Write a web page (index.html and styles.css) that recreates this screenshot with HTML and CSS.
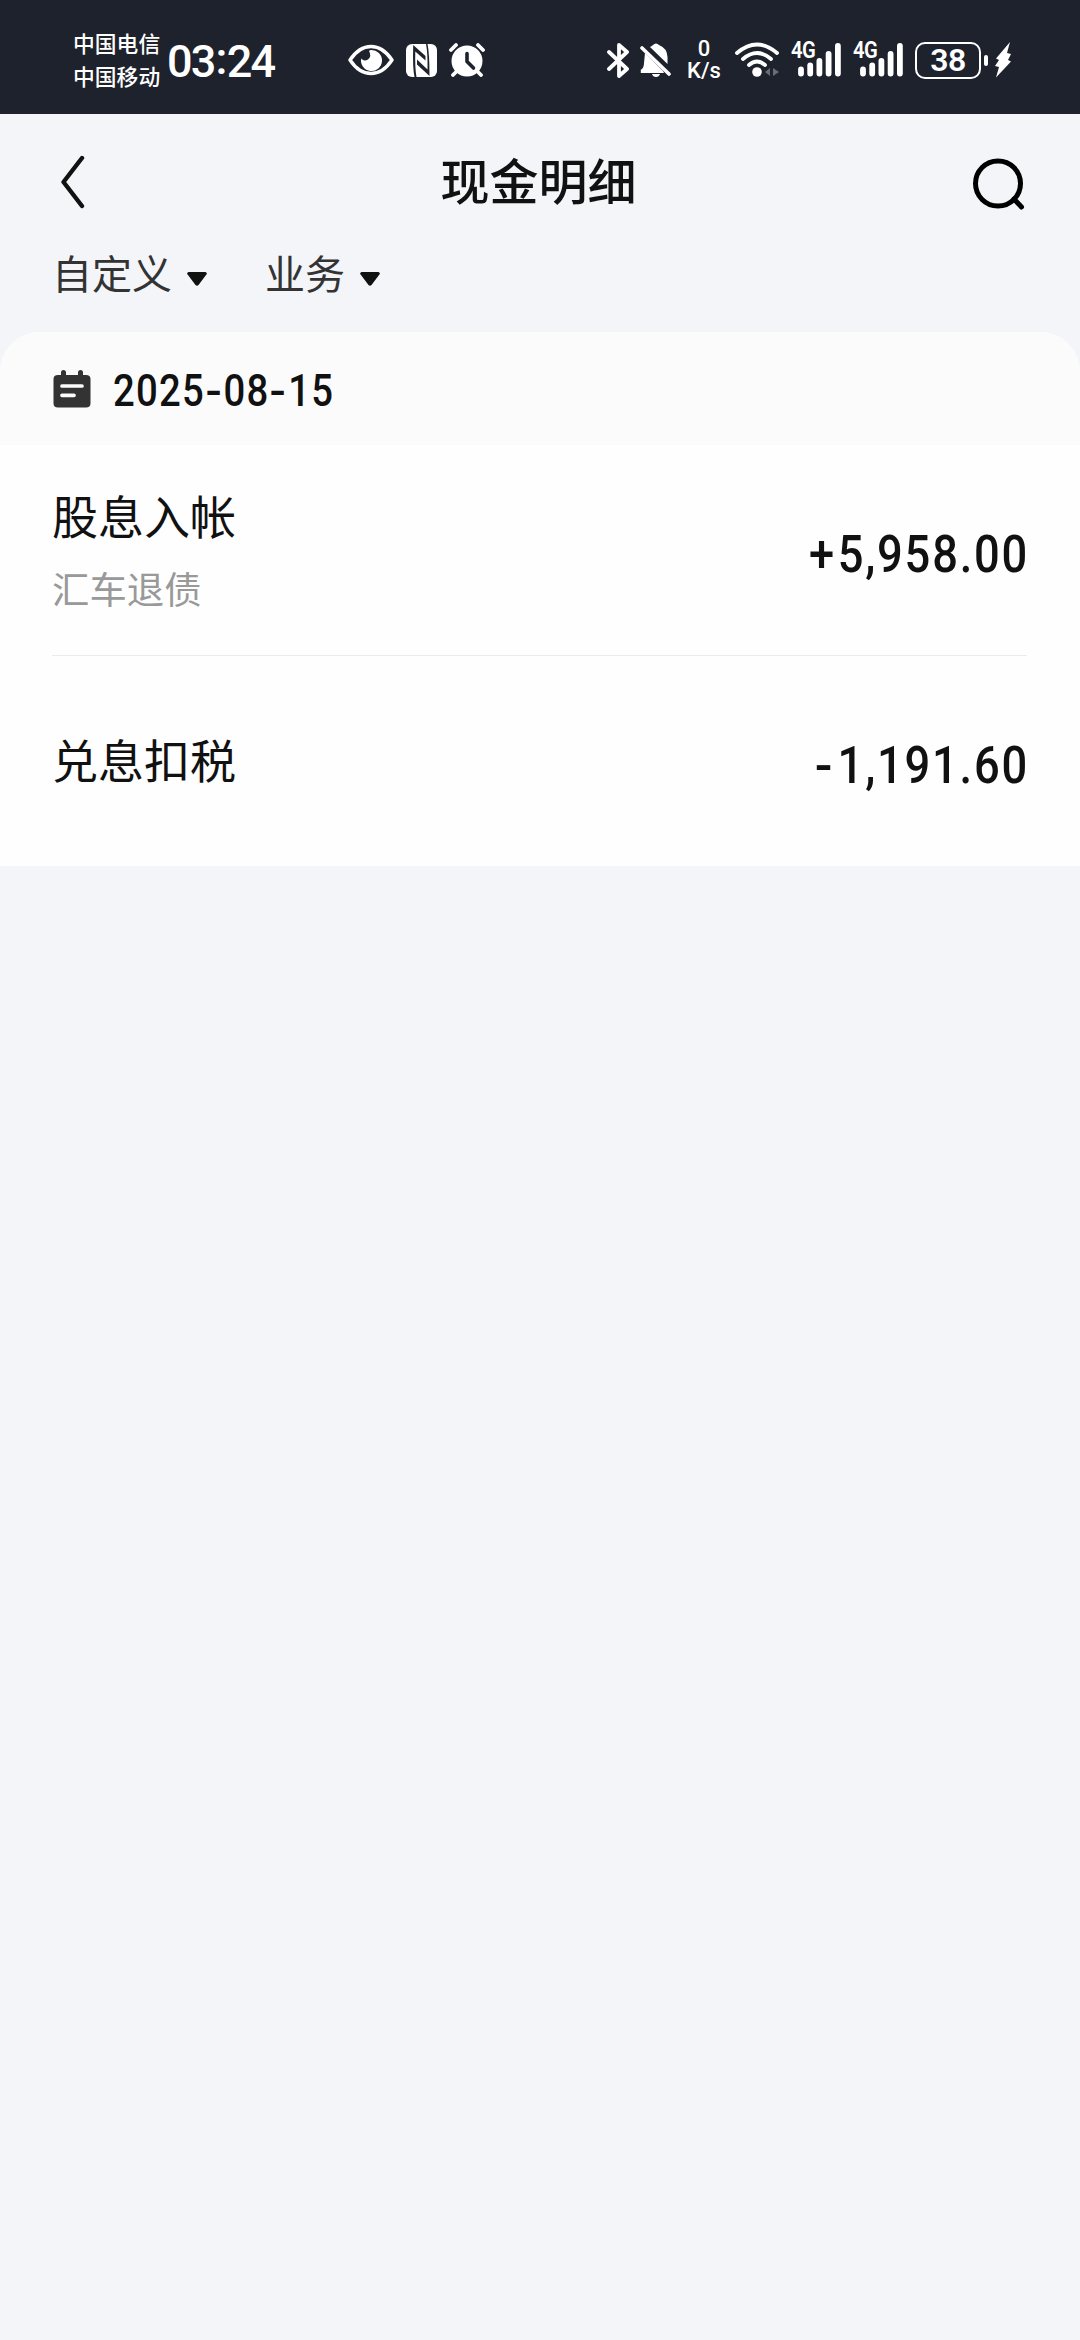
FILE: index.html
```html
<!DOCTYPE html>
<html lang="zh-CN">
<head>
<meta charset="utf-8">
<title>现金明细</title>
<link rel="stylesheet" href="styles.css">
</head>
<body>
<div class="status">
  <div class="carriers"><span>中国电信</span><span>中国移动</span></div>
  <div class="clock">03<span class="colon">:</span>24</div>
  <svg class="eye" width="46" height="32" viewBox="0 0 46 32"><path d="M2 16C14-2 32-2 44 16C32 34 14 34 2 16Z" fill="none" stroke="#fff" stroke-width="3.400" stroke-linejoin="round"/><path d="M23 6a10.500 10.500 0 1 1-9.800 8.500Q16 18 20 15.500Q24 12 21 7Q22 6 23 6Z" fill="#fff"/></svg>
  <svg class="nfc" width="31" height="33" viewBox="0 0 31 33"><rect width="31" height="33" rx="6" fill="#fff"/><path d="M8.500 33Q6.500 24 7.200 1L19.500 12V16.500L9.300 7.500Q8.800 24 10.500 33ZM21.500 0Q23.500 9 23.500 32L11 20.500V15.500L21.500 25.500Q21.800 9 20 0Z" fill="#1e222c"/></svg>
  <svg class="alarm" width="36" height="34" viewBox="0 0 36 34"><circle cx="18" cy="18" r="15.500" fill="#fff"/><path d="M2 7L7 2M29 2L34 7M8 28L4 32M28 28L32 32" stroke="#fff" stroke-width="3.800" stroke-linecap="round"/><path d="M18 10.500V18.500L24.500 25" fill="none" stroke="#1e222c" stroke-width="3.600" stroke-linecap="round" stroke-linejoin="round"/></svg>
  <svg class="bt" width="22" height="35" viewBox="0 0 22 35"><path d="M2 9L20 26L12 33V2L20 9L2 26" fill="none" stroke="#fff" stroke-width="3.800" stroke-linecap="round" stroke-linejoin="round"/></svg>
  <svg class="bell" width="31" height="35" viewBox="0 0 31 35"><path d="M5 10L23 28L24 30H0.800V26.800Q4 25 4 20ZM10 4Q12 3 13 2Q16-1 19 2Q27 5 27.500 14V21ZM12 31H20Q19 34 16 34T12 31Z" fill="#fff"/><path d="M2 5L29 31" stroke="#fff" stroke-width="3.600" stroke-linecap="round"/></svg>
  <div class="speed"><span>0</span><span>K/s</span></div>
  <svg class="wifi" width="44" height="36" viewBox="0 0 44 36"><path d="M2 11Q22-6 42 11M8 17Q22 5 36 17M14 23Q22 16 30 23" fill="none" stroke="#fff" stroke-width="3.800" stroke-linecap="round"/><circle cx="22" cy="30" r="4.800" fill="#fff"/><path d="M35 26V34L30 30ZM38 26V34L44 30Z" fill="#696c74"/></svg>
  <div class="signal"><b>4G</b><svg width="43" height="34" viewBox="0 0 43 34"><path d="M3 26.500V30.500M12.200 22.500V30.500M21.400 18V30.500M30.600 11V30.500M39.900 3V30.500" stroke="#fff" stroke-width="5.800" stroke-linecap="round"/></svg></div>
  <div class="signal"><b>4G</b><svg width="43" height="34" viewBox="0 0 43 34"><path d="M3 26.500V30.500M12.200 22.500V30.500M21.400 18V30.500M30.600 11V30.500M39.900 3V30.500" stroke="#fff" stroke-width="5.800" stroke-linecap="round"/></svg></div>
  <div class="battery">38</div>
  <i class="nub"></i>
  <svg class="bolt" width="17" height="38" viewBox="0 0 17 38"><path d="M15 1L1 17.500L4 19L0 25L4 26L1 36.500L16 20.500L13 19L16 13L12 12Z" fill="#fff"/></svg>
</div>
<header class="bar">
  <svg class="back" width="26" height="54" viewBox="0 0 26 54"><path d="M22 3L3.500 27L22 51" fill="none" stroke="#111" stroke-width="4.400" stroke-linecap="round" stroke-linejoin="round"/></svg>
  <h1>现金明细</h1>
  <svg class="search" width="52" height="52" viewBox="0 0 52 52"><circle cx="25" cy="25.500" r="22.500" fill="none" stroke="#000" stroke-width="5"/><path d="M41 41L48.500 49" stroke="#000" stroke-width="5" stroke-linecap="round"/></svg>
</header>
<nav class="filters">
  <div class="filter">自定义<svg width="20" height="14" viewBox="0 0 20 14"><path d="M1.500 0H18.500Q21 1 19 3L11.500 13Q10 14.500 8.500 13L1 3Q-1 1 1.500 0Z" fill="#111"/></svg></div>
  <div class="filter">业务<svg width="20" height="14" viewBox="0 0 20 14"><path d="M1.500 0H18.500Q21 1 19 3L11.500 13Q10 14.500 8.500 13L1 3Q-1 1 1.500 0Z" fill="#111"/></svg></div>
</nav>
<main class="card">
  <div class="date">
    <svg width="38" height="38" viewBox="0 0 38 38"><path d="M5 5H8V2.500a2.500 2.500 0 0 1 5 0V5H25V2.500a2.500 2.500 0 0 1 5 0V5H33Q37.500 5 37.500 9V33.500Q37.500 37.500 33 37.500H5Q.5 37.500 .5 33.500V9Q.5 5 5 5Z" fill="#333"/><path d="M9 16H29M9 25.300H21" stroke="#fbfbfb" stroke-width="3.700" stroke-linecap="round"/></svg>
    <div class="day">2025<span class="dash">-</span>08<span class="dash">-</span>15</div>
  </div>
  <div class="row">
    <div class="label"><div class="name">股息入帐</div><div class="sub">汇车退债</div></div>
    <div class="amount"><span class="sign">+</span>5,958.00</div>
  </div>
  <div class="row last">
    <div class="label"><div class="name">兑息扣税</div></div>
    <div class="amount"><span class="sign minus">-</span>1,191.60</div>
  </div>
</main>
</body>
</html>
```
FILE: styles.css
```css
* { box-sizing: border-box; }
body {
  margin: 0;
  min-height: 2340px;
  background: #f3f5f9;
  color: #111;
  font-family: "Noto Sans CJK SC", sans-serif;
}
svg { display: block; flex: none; }

.status {
  height: 114px;
  padding: 6px 0 0 73px;
  display: flex;
  align-items: center;
  background: #1e222c;
  color: #fff;
}
.carriers {
  width: 94px;
  padding-bottom: 3px;
  display: flex;
  flex-direction: column;
  font-size: 21.8px;
  font-weight: 500;
  line-height: 33px;
}
.clock {
  width: 109px;
  padding-top: 3px;
  font: 500 45px/54px Roboto, sans-serif;
  letter-spacing: -1.8px;
  white-space: nowrap;
}
.colon { position: relative; top: -3px; margin: 0 1px; }
.eye { margin-left: 72px; }
.nfc { margin-left: 12px; }
.alarm { margin-left: 12px; }
.bt { margin-left: 122px; }
.bell { margin-left: 11px; }
.speed {
  width: 36px;
  margin-left: 15px;
  display: flex;
  flex-direction: column;
  align-items: center;
  font: 500 22px/22px Roboto, sans-serif;
}
.wifi { margin-left: 13px; }
.signal {
  position: relative;
  width: 50px;
  margin-left: 12px;
  padding-left: 7px;
}
.signal b {
  position: absolute;
  left: 0;
  top: -4px;
  font: 600 23px/24px Roboto, sans-serif;
  letter-spacing: -.5px;
  transform: scaleX(.88);
  transform-origin: left;
}
.battery {
  width: 66px;
  height: 37px;
  margin-left: 12px;
  border: 2.5px solid #fff;
  border-radius: 10px;
  font: 600 32px/33px Roboto, sans-serif;
  letter-spacing: -.5px;
  text-align: center;
}
.nub { width: 4px; height: 11px; margin-left: 3px; border-radius: 2px; background: #fff; }
.bolt { margin-left: 7px; }

.bar {
  height: 132px;
  padding: 4px 55px 0 52px;
  display: grid;
  grid-template-columns: 1fr auto 1fr;
  align-items: center;
}
.back { margin-left: 8px; }
.search { justify-self: end; margin-top: 4px; }
h1 {
  margin: 0 0 7px;
  font-size: 49px;
  font-weight: 500;
  line-height: 70px;
}
.filters {
  height: 86px;
  padding: 0 52px;
  display: flex;
  gap: 58px;
  color: #333;
  font-size: 40px;
  line-height: 52px;
}
.filter { height: 52px; display: flex; align-items: center; gap: 15px; }
.filter svg { margin-top: 13px; }

.card { overflow: hidden; border-radius: 40px 40px 0 0; background: #fefefe; }
.date {
  height: 113px;
  padding: 0 53px;
  display: flex;
  align-items: center;
  gap: 22px;
  background: #fbfbfb;
}
.day {
  padding-top: 6px;
  font: 500 43.5px/54px Roboto, sans-serif;
  letter-spacing: 1.4px;
  transform: scaleX(.88);
  transform-origin: left;
}
.dash { display: inline-block; margin: 0 1px; transform: scaleX(1.25); }
.dash + .dash { margin-right: 2px; }
.day .dash { margin: 0 2.5px; }
.row {
  height: 211px;
  margin: 0 53px 0 52px;
  display: flex;
  align-items: center;
  justify-content: space-between;
  border-bottom: 1px solid #ebebeb;
}
.last { height: 210px; border: 0; }
.label { padding-bottom: 5px; }
.last .label { padding-bottom: 7px; }
.name { font-size: 46px; line-height: 68px; }
.sub { margin-top: 12px; color: #999; font-size: 37.4px; line-height: 56px; }
.amount {
  margin-right: -2px;
  padding-top: 10px;
  font: 500 51.5px/62px Roboto, sans-serif;
  letter-spacing: 2px;
  transform: scaleX(.88);
  transform-origin: right;
}
.sign { margin-right: 2px; }
.minus { display: inline-block; margin-right: 5px; transform: scaleX(1.15); }
```
